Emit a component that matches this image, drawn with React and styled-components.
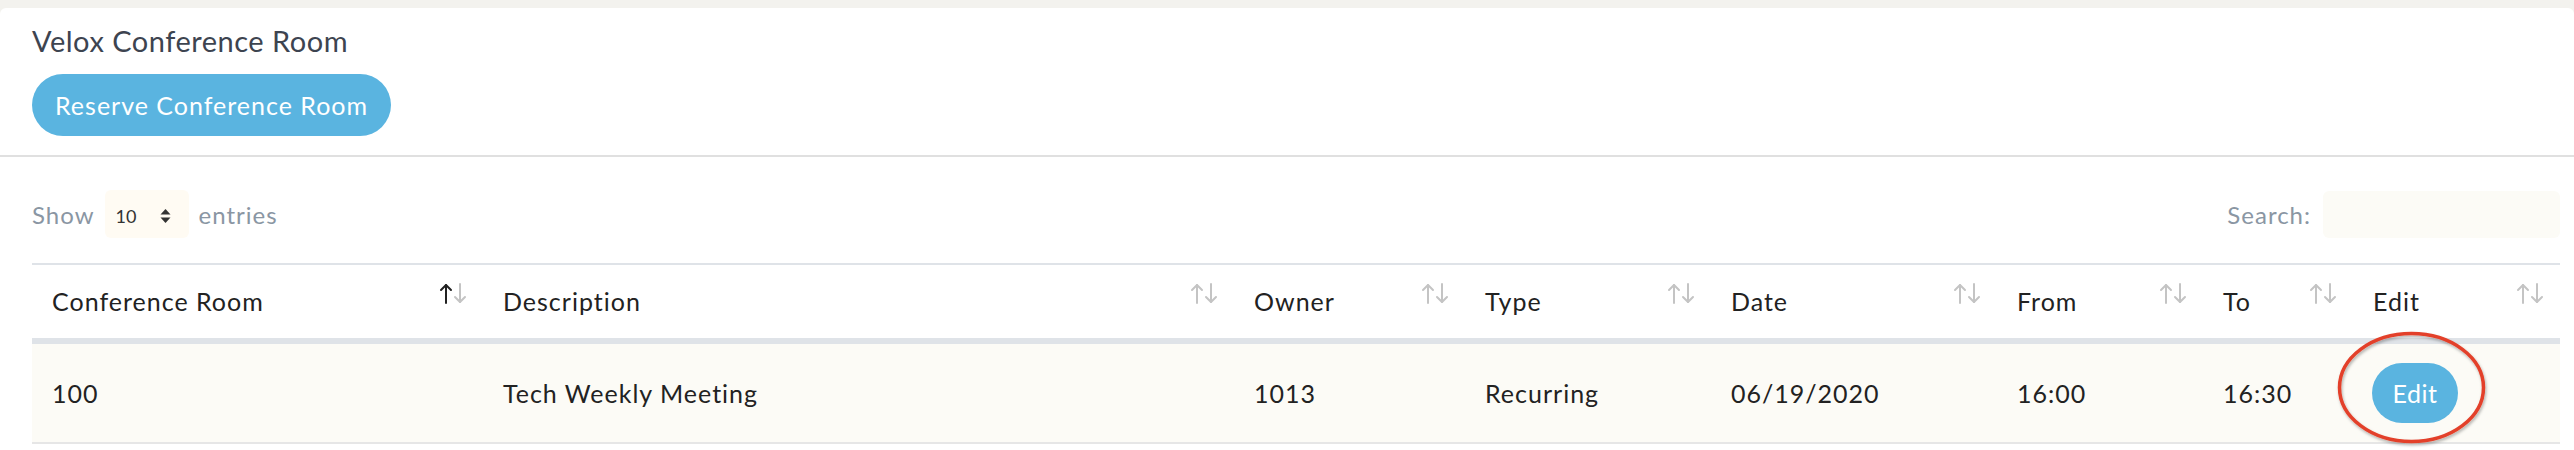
import React from 'react'
import styled, { createGlobalStyle } from 'styled-components'

const GlobalStyle = createGlobalStyle`
  body {
    margin: 0;
    background: #f3f2ee;
    font-family: "Lato", "Open Sans", sans-serif;
  }
`

const Page = styled.div`
  padding-top: 8px;
`

const Card = styled.div`
  background: #ffffff;
  border-radius: 6px 6px 0 0;
`

const Header = styled.div`
  padding: 15px 32px 19px;
  border-bottom: 2px solid #e0e0e0;
`

const Title = styled.h1`
  margin: 0;
  font-size: 29px;
  line-height: 36px;
  font-weight: 400;
  letter-spacing: 0.5px;
  color: #3d4450;
`

const ReserveButton = styled.button`
  margin-top: 15px;
  height: 62px;
  padding: 0 23px;
  border: none;
  border-radius: 31px;
  background: #5ab4e0;
  color: #ffffff;
  font-family: inherit;
  font-size: 25px;
  letter-spacing: 1px;
`

const Body = styled.div`
  padding: 33px 14px 6px 32px;
`

const Controls = styled.div`
  display: flex;
  align-items: center;
  justify-content: space-between;
  margin-bottom: 25px;
`

const Group = styled.label`
  display: flex;
  align-items: center;
  gap: 10px;
  font-size: 24px;
  letter-spacing: 1px;
  color: #8a96a3;
`

const PageSize = styled.div`
  display: flex;
  align-items: center;
  justify-content: space-between;
  width: 84px;
  height: 48px;
  box-sizing: border-box;
  padding: 4px 18px 0 11px;
  background: #fffbf3;
  border-radius: 6px;
  font-size: 18px;
  letter-spacing: 0;
  color: #333;
`

const SearchInput = styled.input`
  width: 237px;
  height: 47px;
  margin-left: 2px;
  box-sizing: border-box;
  border: none;
  border-radius: 6px;
  background: #fcfbf6;
  outline: none;
`

const Table = styled.table`
  width: 2528px;
  border-collapse: collapse;
  table-layout: fixed;
  font-size: 25px;
  letter-spacing: 1px;
  color: #222;
`

const Th = styled.th`
  width: ${p => p.$w - 20}px;
  height: 71px;
  padding: 0 0 2px 20px;
  text-align: left;
  font-weight: 400;
  border-top: 2px solid #dfe3e8;
  border-bottom: 6px solid #dfe3e8;
`

const ThInner = styled.div`
  display: flex;
  align-items: center;
  justify-content: space-between;
  padding-right: 16px;
`

const SortIcon = styled.svg`
  width: 28px;
  height: 21px;
  margin-bottom: 14px;
  flex-shrink: 0;
`

const Row = styled.tr`
  background: #fcfbf6;
`

const Td = styled.td`
  height: 98px;
  padding: 0 0 0 20px;
  border-bottom: 2px solid #e6e6e6;
  position: relative;
`

const EditButton = styled.button`
  width: 86px;
  height: 60px;
  border: none;
  border-radius: 30px;
  background: #5ab4e0;
  color: #ffffff;
  font-family: inherit;
  font-size: 25px;
  letter-spacing: 0.5px;
  margin-left: -1px;
`

const Highlight = styled.svg`
  position: absolute;
  left: -19px;
  top: -16px;
  width: 155px;
  height: 119px;
  pointer-events: none;
  overflow: visible;
`

const Arrows = ({ active }) => (
  <SortIcon viewBox="0 0 28 21" fill="none" strokeWidth="2" strokeLinecap="round" strokeLinejoin="round">
    <g stroke={active ? '#222' : '#c4c4c4'}>
      <path d="M7 20V2" />
      <path d="M2 7l5-5 5 5" />
    </g>
    <g stroke="#c4c4c4">
      <path d="M21 1v18" />
      <path d="M16 14l5 5 5-5" />
    </g>
  </SortIcon>
)

const Caret = () => (
  <svg width="11" height="16" viewBox="0 0 11 16">
    <path d="M5.5 1L10.5 6.5H0.5Z" fill="#333" />
    <path d="M5.5 15L10.5 9.5H0.5Z" fill="#333" />
  </svg>
)

const columns = [
  { name: 'Conference Room', w: 451, active: true },
  { name: 'Description', w: 751 },
  { name: 'Owner', w: 231 },
  { name: 'Type', w: 246 },
  { name: 'Date', w: 286 },
  { name: 'From', w: 206 },
  { name: 'To', w: 150 },
  { name: 'Edit', w: 207 },
]

const row = ['100', 'Tech Weekly Meeting', '1013', 'Recurring', '06/19/2020', '16:00', '16:30']

export default function App() {
  return (
    <Page>
      <GlobalStyle />
      <Card>
        <Header>
          <Title>Velox Conference Room</Title>
          <ReserveButton>Reserve Conference Room</ReserveButton>
        </Header>
        <Body>
          <Controls>
            <Group>
              Show
              <PageSize>
                10
                <Caret />
              </PageSize>
              entries
            </Group>
            <Group>
              Search:
              <SearchInput />
            </Group>
          </Controls>
          <Table>
            <thead>
              <tr>
                {columns.map(c => (
                  <Th key={c.name} $w={c.w}>
                    <ThInner>
                      {c.name}
                      <Arrows active={c.active} />
                    </ThInner>
                  </Th>
                ))}
              </tr>
            </thead>
            <tbody>
              <Row>
                {row.map((v, i) => (
                  <Td key={i}>{v}</Td>
                ))}
                <Td>
                  <EditButton>Edit</EditButton>
                  <Highlight viewBox="0 0 155 119">
                    <defs>
                      <filter id="shadow" x="-20%" y="-20%" width="140%" height="140%">
                        <feDropShadow dx="1" dy="2" stdDeviation="1.5" floodColor="#000" floodOpacity="0.3" />
                      </filter>
                    </defs>
                    <ellipse cx="77.5" cy="59.5" rx="72" ry="54" fill="none" stroke="#e3412a" strokeWidth="3.5" filter="url(#shadow)" />
                  </Highlight>
                </Td>
              </Row>
            </tbody>
          </Table>
        </Body>
      </Card>
    </Page>
  )
}
